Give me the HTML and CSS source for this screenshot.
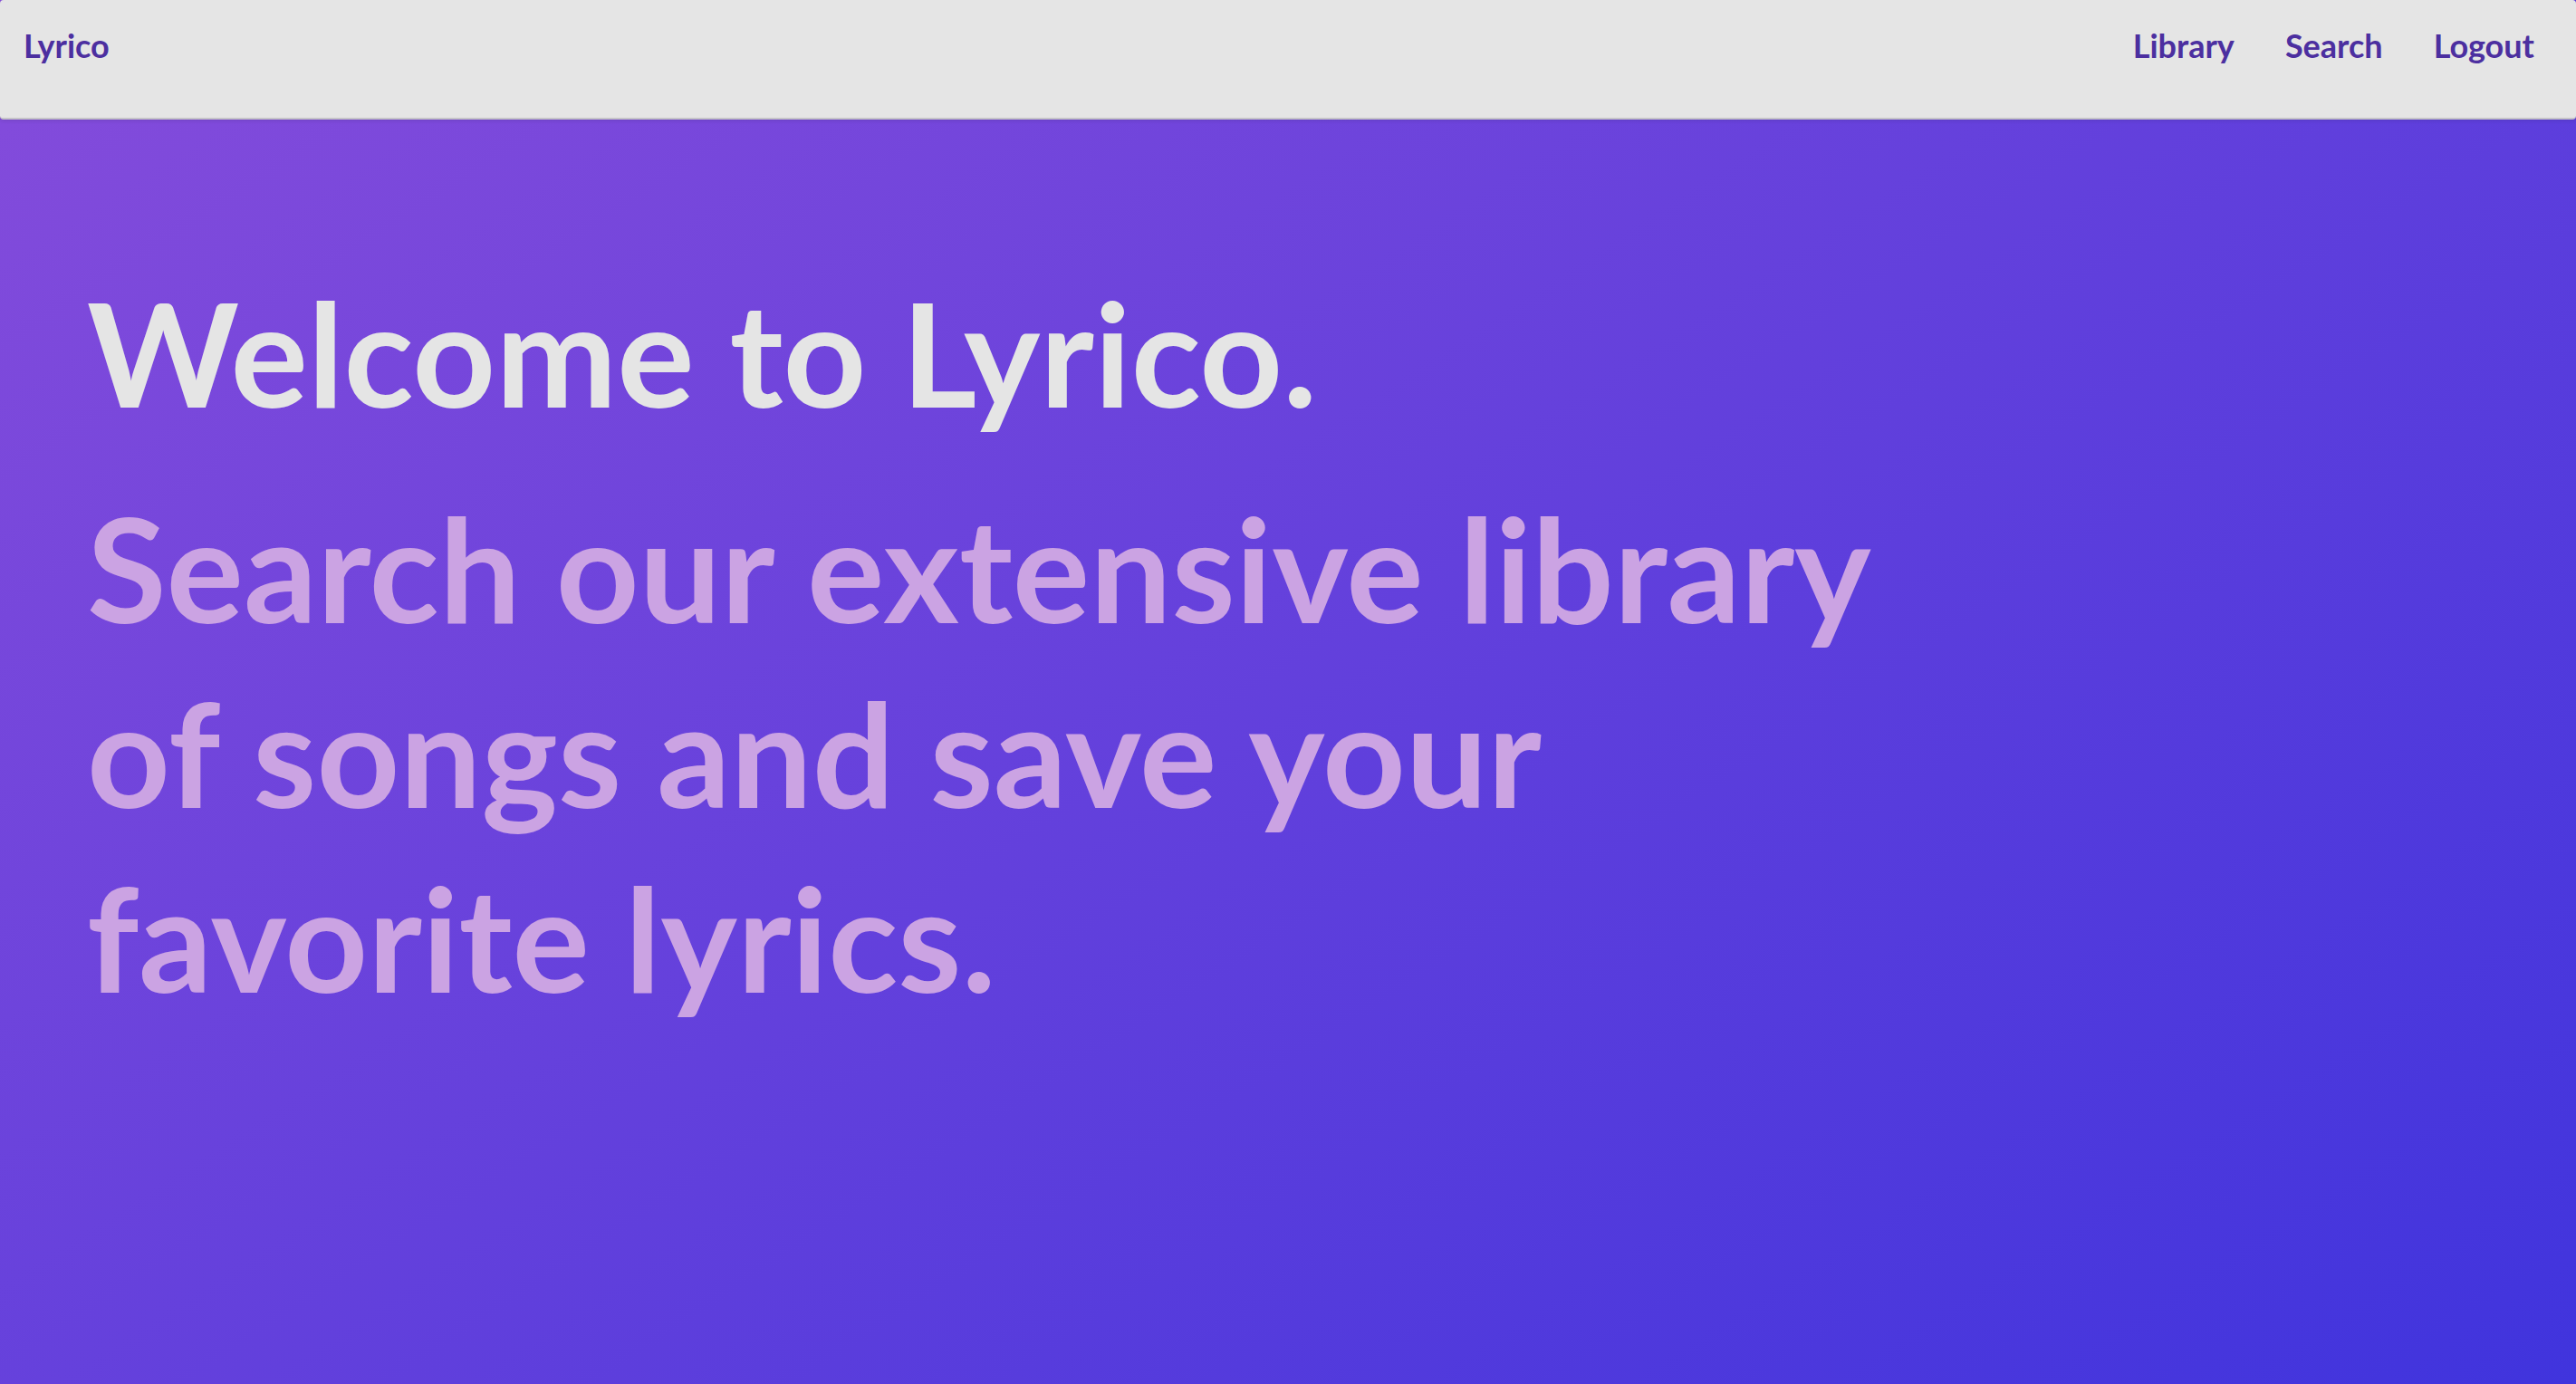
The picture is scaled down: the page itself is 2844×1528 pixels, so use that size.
FILE: index.html
```html
<!DOCTYPE html>
<html lang="en">
<head>
<meta charset="utf-8">
<title>Lyrico</title>
<link rel="stylesheet" href="styles.css">
</head>
<body>
<header class="navbar">
  <a class="brand" href="#">Lyrico</a>
  <nav class="menu">
    <a href="#">Library</a>
    <a href="#">Search</a>
    <a href="#">Logout</a>
  </nav>
</header>
<main class="hero">
  <h1 class="title">Welcome to Lyrico.</h1>
  <p class="subtitle">Search our extensive library of songs and save your favorite lyrics.</p>
</main>
</body>
</html>
```
FILE: styles.css
```css
* {
  box-sizing: border-box;
}

body {
  display: flex;
  flex-direction: column;
  min-height: 100vh;
  margin: 0;
  font-family: Lato, sans-serif;
  font-weight: 700;
  background: linear-gradient(147deg, #854cdb, #4034dd);
}

.navbar {
  display: flex;
  justify-content: space-between;
  padding: 27px 46px 57px 26px;
  border-bottom: 2px solid #c4c3c8;
  border-radius: 4px;
  background: #e5e5e5;
  font-size: 36px;
  line-height: 46px;
  box-shadow: 0 1px 4px rgba(34, 36, 38, 0.15);
}

.navbar a {
  color: #4c2fa0;
  text-decoration: none;
}

.menu {
  display: flex;
  gap: 56px;
}

.hero {
  flex: 1;
  padding: 154px 96px;
  font-size: 160px;
  line-height: 204px;
}

.title {
  margin: 0;
  color: #e5e5e5;
  font-size: 160px;
}

.subtitle {
  max-width: 2100px;
  margin: 34px 0 0;
  color: #cba3e3;
}
```
